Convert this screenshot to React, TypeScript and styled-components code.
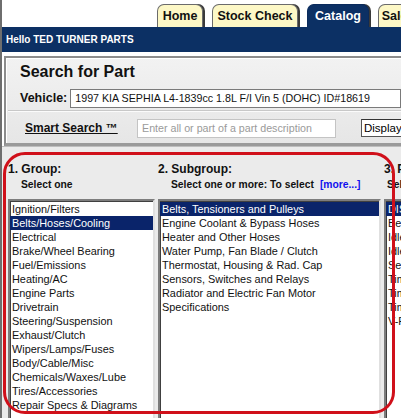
import React from 'react';
import styled, { createGlobalStyle } from 'styled-components';

const GlobalStyle = createGlobalStyle`
  html, body {
    margin: 0;
    padding: 0;
    background: #ffffff;
    overflow: hidden;
  }
  body {
    font-family: 'Liberation Sans', Arial, sans-serif;
  }
`;

const Page = styled.div`
  position: relative;
  width: 401px;
  height: 418px;
  overflow: hidden;
  border-left: 2px solid #6e6e6e;
  box-sizing: border-box;
`;

const TabRow = styled.div`
  display: flex;
  align-items: flex-end;
  height: 27px;
  padding-left: 155px;
  gap: 9px;
  box-sizing: border-box;
  white-space: nowrap;
`;

const Tab = styled.div<{ $active?: boolean; $w: number }>`
  flex: 0 0 auto;
  width: ${(p) => p.$w}px;
  height: 23px;
  box-sizing: border-box;
  border: 1px solid ${(p) => (p.$active ? '#0b2b5c' : '#6b6b6b')};
  border-bottom: none;
  border-radius: 7px 7px 0 0;
  background: ${(p) => (p.$active ? '#0c3064' : '#fdf8c6')};
  color: ${(p) => (p.$active ? '#ffffff' : '#111111')};
  box-shadow: 2px 0 0 #3a3a3a;
  font-weight: bold;
  font-size: 12.5px;
  line-height: 23px;
  text-align: center;
  overflow: hidden;
`;

const NavBar = styled.div`
  height: 25px;
  background: #0c3064;
  color: #ffffff;
  font-size: 10px;
  font-weight: bold;
  line-height: 25px;
  padding-left: 4px;
`;

const SearchPanel = styled.div`
  margin: 4px 0 0 2px;
  height: 90px;
  border: 2px solid #8c8c8c;
  border-right: none;
  border-bottom: 3px solid #9a9a9a;
  background: linear-gradient(#f2f2f2, #e6e6e6);
  box-shadow: inset 1px 1px 0 #ffffff;
  padding: 3px 0 0 14px;
  box-sizing: border-box;
`;

const PanelTitle = styled.div`
  font-size: 16px;
  font-weight: bold;
  color: #111111;
  height: 21px;
  line-height: 21px;
`;

const FieldRow = styled.div`
  display: flex;
  align-items: center;
  gap: 3px;
  height: 22px;
  margin-top: 5px;
`;

const Label = styled.span`
  font-size: 12.5px;
  font-weight: bold;
  color: #111111;
`;

const TextBox = styled.div<{ $w?: number; $muted?: boolean }>`
  ${(p) => (p.$w ? `width: ${p.$w}px;` : 'flex: 1;')}
  height: 19px;
  box-sizing: border-box;
  background: #ffffff;
  border: 1px solid ${(p) => (p.$muted ? '#c4c4c4' : '#7a7a7a')};
  font-size: 10.7px;
  line-height: 17px;
  padding-left: 4px;
  color: ${(p) => (p.$muted ? '#9a9a9a' : '#111111')};
  white-space: nowrap;
  overflow: hidden;
`;

const Divider = styled.div`
  height: 1px;
  background: #c8c8c8;
  border-bottom: 1px solid #fbfbfb;
  margin: 1px 0 0 -12px;
`;

const SmartRow = styled.div`
  display: flex;
  align-items: center;
  height: 26px;
  margin-top: 3px;
  padding-left: 5px;
`;

const SmartLink = styled.span`
  font-size: 12px;
  font-weight: bold;
  color: #111111;
  text-decoration: underline;
  width: 112px;
`;

const SelectBox = styled.div`
  margin-left: 25px;
  height: 18px;
  box-sizing: border-box;
  border: 1px solid #555555;
  border-right: none;
  border-top-color: #333;
  background: #ffffff;
  font-size: 11.5px;
  line-height: 17px;
  padding-left: 2px;
  flex: 1;
  white-space: nowrap;
  overflow: hidden;
`;

const CatalogArea = styled.div`
  background: #ebebeb;
  height: 280px;
  display: flex;
  gap: 3px;
  padding: 15px 0 0 6px;
  box-sizing: border-box;
  border-top: 1px solid #bdbdbd;
`;

const Column = styled.div<{ $w: number }>`
  flex: 0 0 ${(p) => p.$w}px;
  width: ${(p) => p.$w}px;
  display: flex;
  flex-direction: column;
  white-space: nowrap;
`;

const ColTitle = styled.div`
  font-size: 12px;
  font-weight: bold;
  color: #111111;
  height: 15px;
  line-height: 15px;
`;

const ColHint = styled.div<{ $indent?: number }>`
  font-size: 10.3px;
  font-weight: bold;
  color: #111111;
  padding-left: ${(p) => p.$indent ?? 13}px;
  height: 16px;
  line-height: 16px;
`;

const MoreLink = styled.span`
  color: #1010ee;
  margin-left: 6px;
`;

const ListBox = styled.div`
  margin-top: 6px;
  height: 240px;
  box-sizing: border-box;
  background: #ffffff;
  border: 2px solid;
  border-color: #7d7d7d #e0e0e0 #e0e0e0 #7d7d7d;
  box-shadow: inset 1px 1px 0 #404040;
  padding-top: 1px;
  overflow: hidden;
`;

const ListItem = styled.div<{ $selected?: boolean }>`
  height: 14px;
  line-height: 14px;
  font-size: 10.9px;
  padding-left: 2px;
  color: ${(p) => (p.$selected ? '#ffffff' : '#111111')};
  background: ${(p) => (p.$selected ? '#0a246a' : 'transparent')};
  overflow: hidden;
`;

const Highlight = styled.div`
  position: absolute;
  left: 1px;
  top: 152px;
  width: 392px;
  height: 262px;
  box-sizing: border-box;
  border: 3px solid #d0101a;
  border-radius: 22px;
  pointer-events: none;
`;

const groups = [
  'Ignition/Filters',
  'Belts/Hoses/Cooling',
  'Electrical',
  'Brake/Wheel Bearing',
  'Fuel/Emissions',
  'Heating/AC',
  'Engine Parts',
  'Drivetrain',
  'Steering/Suspension',
  'Exhaust/Clutch',
  'Wipers/Lamps/Fuses',
  'Body/Cable/Misc',
  'Chemicals/Waxes/Lube',
  'Tires/Accessories',
  'Repair Specs & Diagrams',
];

const subgroups = [
  'Belts, Tensioners and Pulleys',
  'Engine Coolant & Bypass Hoses',
  'Heater and Other Hoses',
  'Water Pump, Fan Blade / Clutch',
  'Thermostat, Housing & Rad. Cap',
  'Sensors, Switches and Relays',
  'Radiator and Electric Fan Motor',
  'Specifications',
];

const parts = [
  'DISPLAY ALL',
  'Belt Tensioner',
  'Idler Pulley',
  'Idler Pulley Bracket',
  'Serpentine Belt',
  'Timing Belt',
  'Timing Belt Kit',
  'Timing Belt Tensioner',
  'V-Ribbed Belt',
];

const App: React.FC = () => {
  return (
    <>
      <GlobalStyle />
      <Page>
        <TabRow>
          <Tab $w={46}>Home</Tab>
          <Tab $w={86}>Stock Check</Tab>
          <Tab $w={62} $active>Catalog</Tab>
          <Tab $w={40}>Sales</Tab>
        </TabRow>
        <NavBar>Hello TED TURNER PARTS</NavBar>
        <SearchPanel>
          <PanelTitle>Search for Part</PanelTitle>
          <FieldRow>
            <Label>Vehicle:</Label>
            <TextBox>1997 KIA SEPHIA L4-1839cc 1.8L F/I Vin 5 (DOHC) ID#18619</TextBox>
          </FieldRow>
          <Divider />
          <SmartRow>
            <SmartLink>Smart Search ™</SmartLink>
            <TextBox $w={199} $muted>Enter all or part of a part description</TextBox>
            <SelectBox>Display</SelectBox>
          </SmartRow>
        </SearchPanel>
        <CatalogArea>
          <Column $w={147}>
            <ColTitle>1. Group:</ColTitle>
            <ColHint>Select one</ColHint>
            <ListBox>
              {groups.map((g, i) => (
                <ListItem key={g} $selected={i === 1}>{g}</ListItem>
              ))}
            </ListBox>
          </Column>
          <Column $w={223}>
            <ColTitle>2. Subgroup:</ColTitle>
            <ColHint>
              Select one or more: To select<MoreLink>[more...]</MoreLink>
            </ColHint>
            <ListBox>
              {subgroups.map((s, i) => (
                <ListItem key={s} $selected={i === 0}>{s}</ListItem>
              ))}
            </ListBox>
          </Column>
          <Column $w={120}>
            <ColTitle>3. Part:</ColTitle>
            <ColHint $indent={3}>Select</ColHint>
            <ListBox>
              {parts.map((p, i) => (
                <ListItem key={p + i} $selected={i === 0}>{p}</ListItem>
              ))}
            </ListBox>
          </Column>
        </CatalogArea>
        <Highlight />
      </Page>
    </>
  );
};

export default App;
